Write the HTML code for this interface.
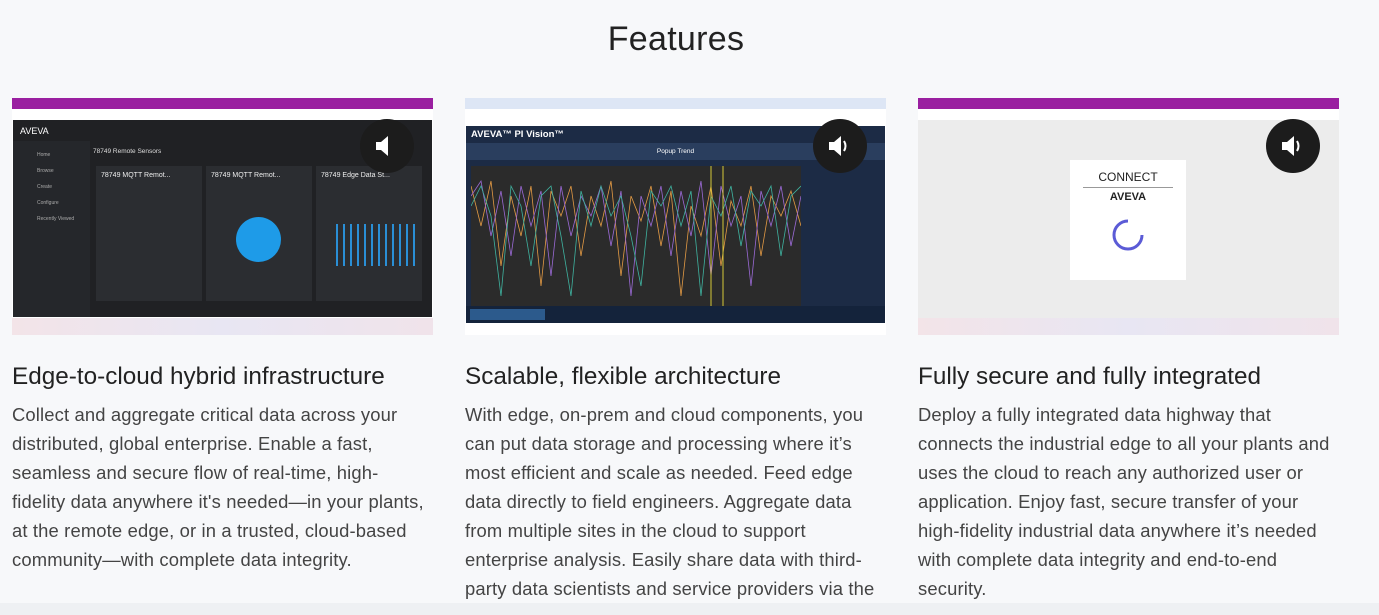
<!DOCTYPE html>
<html><head><meta charset="utf-8"><style>
*{margin:0;padding:0;box-sizing:border-box}
body{width:1379px;height:615px;overflow:hidden;background:#f7f8fa;font-family:"Liberation Sans",sans-serif;position:relative}
h1{position:absolute;top:20px;left:0;width:1352px;text-align:center;font-weight:400;font-size:34px;color:#222;letter-spacing:0.3px}
.card{position:absolute;top:98px;width:440px}
.shot{position:relative;width:421px;height:237px;overflow:hidden}
h2{font-size:24.3px;font-weight:400;color:#222;margin-top:28px;letter-spacing:0;white-space:nowrap}
p{font-size:18.4px;line-height:29px;color:#444;margin-top:9px;letter-spacing:0.15px;white-space:nowrap}
.spk{position:absolute;width:54px;height:54px;border-radius:50%;background:#1c1c1c;top:21px}
.spk svg{position:absolute;left:14px;top:15px}
.bottom{position:absolute;left:0;top:603px;width:1379px;height:12px;background:#eef0f3}
.task{position:absolute;left:0;bottom:0;width:421px;height:17px;background:linear-gradient(90deg,#f3e4e8,#e8e6f3,#f0e3ea)}
.tab{position:absolute;top:0;left:0;width:421px;height:11px}
</style></head><body>
<h1>Features</h1>

<div class="card" style="left:12px">
<div class="shot" style="background:#fff">
 <div class="tab" style="background:#9a1fa0"></div>
 <div style="position:absolute;top:11px;left:0;width:421px;height:11px;background:#fff"></div>
 <div style="position:absolute;top:22px;left:1px;width:419px;height:197px;background:#202124">
  <div style="position:absolute;left:7px;top:6px;color:#fff;font-size:9px">AVEVA</div>
  <div style="position:absolute;left:0;top:21px;width:77px;height:176px;background:#25272b;color:#aaa;font-size:5px;line-height:16px;padding:6px 0 0 24px">Home<br>Browse<br>Create<br>Configure<br>Recently Viewed</div>
  <div style="position:absolute;left:80px;top:28px;color:#ddd;font-size:6.5px">78749 Remote Sensors</div>
  <div style="position:absolute;left:83px;top:46px;width:106px;height:135px;background:#2b2d31"><div style="color:#eee;font-size:7px;padding:6px 5px">78749 MQTT Remot...</div></div>
  <div style="position:absolute;left:193px;top:46px;width:106px;height:135px;background:#2b2d31"><div style="color:#eee;font-size:7px;padding:6px 5px">78749 MQTT Remot...</div>
   <div style="position:absolute;left:30px;top:51px;width:45px;height:45px;border-radius:50%;background:#1e9be8"></div></div>
  <div style="position:absolute;left:303px;top:46px;width:106px;height:135px;background:#2b2d31"><div style="color:#eee;font-size:7px;padding:6px 5px">78749 Edge Data St...</div>
   <div style="position:absolute;left:20px;top:58px;width:80px;height:42px;background:repeating-linear-gradient(90deg,#2a8fd6 0 2px,transparent 2px 7px)"></div></div>
 </div>
 <div class="task"></div>
 <div class="spk" style="left:348px"><svg width="26" height="24" viewBox="0 0 26 24"><path d="M2 8h5l7-6v20l-7-6H2z" fill="#fff"/></svg></div>
</div>
<h2>Edge-to-cloud hybrid infrastructure</h2>
<p>Collect and aggregate critical data across your<br>distributed, global enterprise. Enable a fast,<br>seamless and secure flow of real-time, high-<br>fidelity data anywhere it's needed—in your plants,<br>at the remote edge, or in a trusted, cloud-based<br>community—with complete data integrity.</p>
</div>

<div class="card" style="left:465px">
<div class="shot" style="background:#fff">
 <div class="tab" style="background:#dde6f5"></div>
 <div style="position:absolute;top:28px;left:1px;width:419px;height:197px;background:#1c2b45">
  <div style="position:absolute;left:5px;top:3px;color:#fff;font-size:9.5px;font-weight:bold">AVEVA™ PI Vision™</div>
  <div style="position:absolute;left:0;top:17px;width:419px;height:17px;background:#2a3e5e;color:#fff;font-size:6.5px;text-align:center;line-height:17px">Popup Trend</div>
  <div style="position:absolute;left:5px;top:40px;width:330px;height:140px;background:#2b2b2b">
   <svg width="330" height="140"><polyline fill="none" stroke="#e39a44" stroke-width="0.8" points="0,20 10,60 20,15 30,100 40,30 50,70 60,20 70,120 80,25 90,50 100,20 110,90 120,30 130,60 140,15 150,110 160,30 170,55 180,20 190,80 200,25 210,130 220,40 230,70 240,20 250,100 260,35 270,60 280,20 290,90 300,30 310,50 320,25 330,60"/><polyline fill="none" stroke="#9b6ad6" stroke-width="0.8" points="0,30 10,15 20,70 30,25 40,90 50,20 60,60 70,25 80,110 90,20 100,70 110,30 120,50 130,20 140,80 150,25 160,130 170,30 180,60 190,20 200,90 210,25 220,70 230,15 240,110 250,20 260,60 270,30 280,120 290,25 300,60 310,20 320,80 330,30"/><polyline fill="none" stroke="#3fb3a0" stroke-width="0.8" points="0,40 10,20 20,50 30,130 40,20 50,40 60,100 70,30 80,20 90,70 100,130 110,25 120,60 130,20 140,50 150,30 160,70 170,120 180,25 190,40 200,20 210,60 220,25 230,130 240,30 250,50 260,20 270,80 280,25 290,40 300,20 310,90 320,30 330,20"/><line x1="252" y1="0" x2="252" y2="140" stroke="#d6c93a"/><line x1="240" y1="0" x2="240" y2="140" stroke="#d6c93a"/></svg>
  </div>
  <div style="position:absolute;left:0;top:180px;width:419px;height:17px;background:#14233b"></div>
  <div style="position:absolute;left:4px;top:183px;width:75px;height:11px;background:#2c5a8c"></div>
 </div>
 <div class="spk" style="left:348px"><svg width="26" height="24" viewBox="0 0 26 24"><path d="M2 8h5l7-6v20l-7-6H2z" fill="#fff"/><path d="M17 7q3 5 0 10" stroke="#fff" stroke-width="2" fill="none"/></svg></div>
</div>
<h2>Scalable, flexible architecture</h2>
<p>With edge, on-prem and cloud components, you<br>can put data storage and processing where it’s<br>most efficient and scale as needed. Feed edge<br>data directly to field engineers. Aggregate data<br>from multiple sites in the cloud to support<br>enterprise analysis. Easily share data with third-<br>party data scientists and service providers via the</p>
</div>

<div class="card" style="left:918px">
<div class="shot" style="background:#ececec">
 <div class="tab" style="background:#9a1fa0"></div>
 <div style="position:absolute;top:11px;left:0;width:421px;height:11px;background:#fff"></div>
 <div style="position:absolute;left:152px;top:62px;width:116px;height:120px;background:#fff;text-align:center">
  <div style="font-size:12px;color:#222;margin-top:10px">CONNECT</div>
  <div style="width:90px;height:1px;background:#999;margin:3px auto"></div>
  <div style="font-size:11px;color:#222;font-weight:bold">AVEVA</div>
  <svg width="36" height="36" style="margin-top:14px"><path d="M18 4 A14 14 0 1 0 32 18" stroke="#5b5bd6" stroke-width="3" fill="none"/></svg>
 </div>
 <div class="task"></div>
 <div class="spk" style="left:348px"><svg width="26" height="24" viewBox="0 0 26 24"><path d="M2 8h5l7-6v20l-7-6H2z" fill="#fff"/><path d="M17 7q3 5 0 10" stroke="#fff" stroke-width="2" fill="none"/></svg></div>
</div>
<h2>Fully secure and fully integrated</h2>
<p>Deploy a fully integrated data highway that<br>connects the industrial edge to all your plants and<br>uses the cloud to reach any authorized user or<br>application. Enjoy fast, secure transfer of your<br>high-fidelity industrial data anywhere it’s needed<br>with complete data integrity and end-to-end<br>security.</p>
</div>
<div class="bottom"></div>
</body></html>
